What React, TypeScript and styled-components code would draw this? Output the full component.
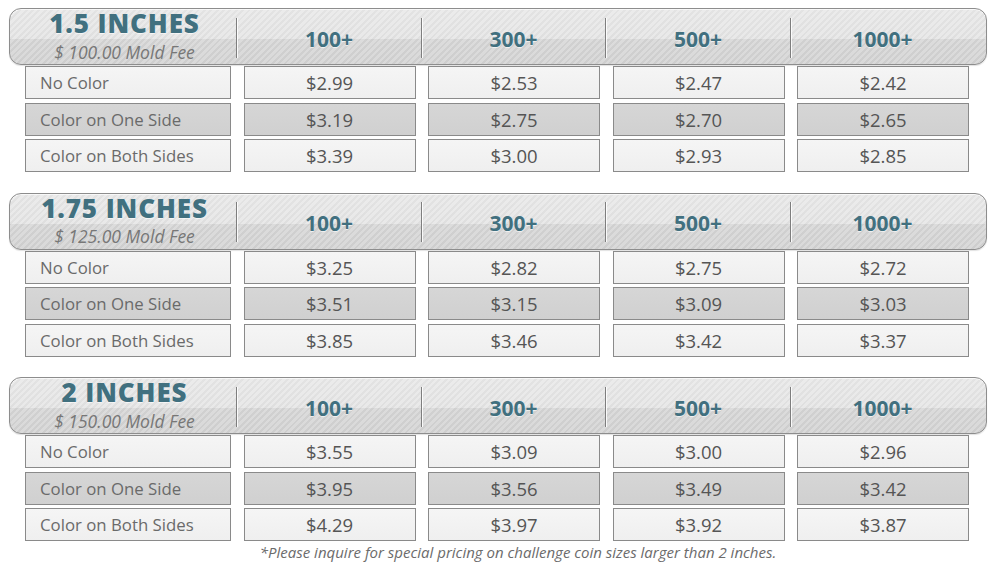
import React from 'react';
import styled, { createGlobalStyle } from 'styled-components';

const Global = createGlobalStyle`
  html, body { margin: 0; padding: 0; background: #ffffff; }
  body { font-family: "Open Sans", "Liberation Sans", sans-serif; }
`;

const Page = styled.div`
  width: 995px;
  height: 565px;
  box-sizing: border-box;
  padding: 8px 8px 0 9px;
  display: flex;
  flex-direction: column;
`;

const Sections = styled.div`
  display: flex;
  flex-direction: column;
  gap: 20.5px;
`;

const Section = styled.section`
  width: 978px;
  display: flex;
  flex-direction: column;
`;

const Header = styled.div`
  height: 57px;
  box-sizing: border-box;
  border: 1.5px solid #8d8d8d;
  border-radius: 12px;
  padding-left: 14.5px;
  display: grid;
  grid-template-columns: 206px repeat(4, 172px);
  column-gap: 12.5px;
  box-shadow: 0 1px 1px rgba(0, 0, 0, 0.12), inset 0 1px 0 rgba(255, 255, 255, 0.7);
  background:
    linear-gradient(to bottom, rgba(255, 255, 255, 0.3) 0%, rgba(255, 255, 255, 0.2) 54%, rgba(0, 0, 0, 0.03) 54%, rgba(0, 0, 0, 0.045) 100%),
    repeating-linear-gradient(135deg, #e3e3e3 0px, #e3e3e3 2.5px, #d7d7d7 2.5px, #d7d7d7 4.5px);
`;

const TitleCell = styled.div`
  display: flex;
  flex-direction: column;
  align-items: center;
  padding-top: 1px;
  padding-right: 6px;
`;

const Title = styled.div`
  font-size: 26px;
  line-height: 26px;
  font-weight: 800;
  letter-spacing: 0.9px;
  color: #41707f;
  text-shadow: 0 1px 0 rgba(255, 255, 255, 0.6);
  white-space: nowrap;
`;

const Fee = styled.div`
  font-size: 17.5px;
  line-height: 19px;
  font-style: italic;
  color: #777777;
  margin-top: 6.8px;
  white-space: nowrap;
`;

const QtyCell = styled.div`
  position: relative;
  display: flex;
  align-items: center;
  justify-content: center;
  padding-top: 4px;
  font-size: 21px;
  font-weight: 700;
  color: #41707f;
  text-shadow: 0 1px 0 rgba(255, 255, 255, 0.6);

  &::before {
    content: '';
    position: absolute;
    left: -7px;
    top: 8.5px;
    bottom: 6.5px;
    width: 1px;
    background: #7e7e7e;
    box-shadow: 1px 0 0 rgba(255, 255, 255, 0.85);
  }
`;

const Rows = styled.div`
  margin-top: 1px;
  padding-left: 16px;
  display: grid;
  grid-template-columns: 206px repeat(4, 172px);
  column-gap: 12.5px;
  row-gap: 3.5px;
`;

const Cell = styled.div<{ $shade: boolean; $label?: boolean }>`
  height: 33px;
  box-sizing: border-box;
  border: 1px solid #8a8a8a;
  display: flex;
  align-items: center;
  justify-content: ${(p) => (p.$label ? 'flex-start' : 'center')};
  padding-left: ${(p) => (p.$label ? '14px' : '0')};
  background: ${(p) =>
    p.$shade
      ? 'linear-gradient(to bottom, #d6d6d6, #d0d0d0)'
      : 'linear-gradient(to bottom, #f5f5f5, #efefef)'};
  color: ${(p) => (p.$label ? '#6a6a6a' : '#555555')};
  font-size: ${(p) => (p.$label ? '16.8px' : '18.5px')};
  white-space: nowrap;
`;

const Footnote = styled.div`
  margin-top: 2px;
  padding-left: 40px;
  width: 978px;
  box-sizing: border-box;
  text-align: center;
  font-size: 15px;
  line-height: 18px;
  font-style: italic;
  color: #6b6b6b;
`;

type Size = { title: string; fee: string; prices: string[][] };

const quantities = ['100+', '300+', '500+', '1000+'];
const options = ['No Color', 'Color on One Side', 'Color on Both Sides'];

const sizes: Size[] = [
  {
    title: '1.5 INCHES',
    fee: '$ 100.00 Mold Fee',
    prices: [
      ['$2.99', '$2.53', '$2.47', '$2.42'],
      ['$3.19', '$2.75', '$2.70', '$2.65'],
      ['$3.39', '$3.00', '$2.93', '$2.85'],
    ],
  },
  {
    title: '1.75 INCHES',
    fee: '$ 125.00 Mold Fee',
    prices: [
      ['$3.25', '$2.82', '$2.75', '$2.72'],
      ['$3.51', '$3.15', '$3.09', '$3.03'],
      ['$3.85', '$3.46', '$3.42', '$3.37'],
    ],
  },
  {
    title: '2 INCHES',
    fee: '$ 150.00 Mold Fee',
    prices: [
      ['$3.55', '$3.09', '$3.00', '$2.96'],
      ['$3.95', '$3.56', '$3.49', '$3.42'],
      ['$4.29', '$3.97', '$3.92', '$3.87'],
    ],
  },
];

export default function App() {
  return (
    <>
      <Global />
      <Page>
        <Sections>
          {sizes.map((s) => (
            <Section key={s.title}>
              <Header>
                <TitleCell>
                  <Title>{s.title}</Title>
                  <Fee>{s.fee}</Fee>
                </TitleCell>
                {quantities.map((q) => (
                  <QtyCell key={q}>{q}</QtyCell>
                ))}
              </Header>
              <Rows>
                {options.map((o, i) => (
                  <React.Fragment key={o}>
                    <Cell $shade={i === 1} $label>
                      {o}
                    </Cell>
                    {s.prices[i].map((p, j) => (
                      <Cell key={j} $shade={i === 1}>
                        {p}
                      </Cell>
                    ))}
                  </React.Fragment>
                ))}
              </Rows>
            </Section>
          ))}
        </Sections>
        <Footnote>*Please inquire for special pricing on challenge coin sizes larger than 2 inches.</Footnote>
      </Page>
    </>
  );
}
